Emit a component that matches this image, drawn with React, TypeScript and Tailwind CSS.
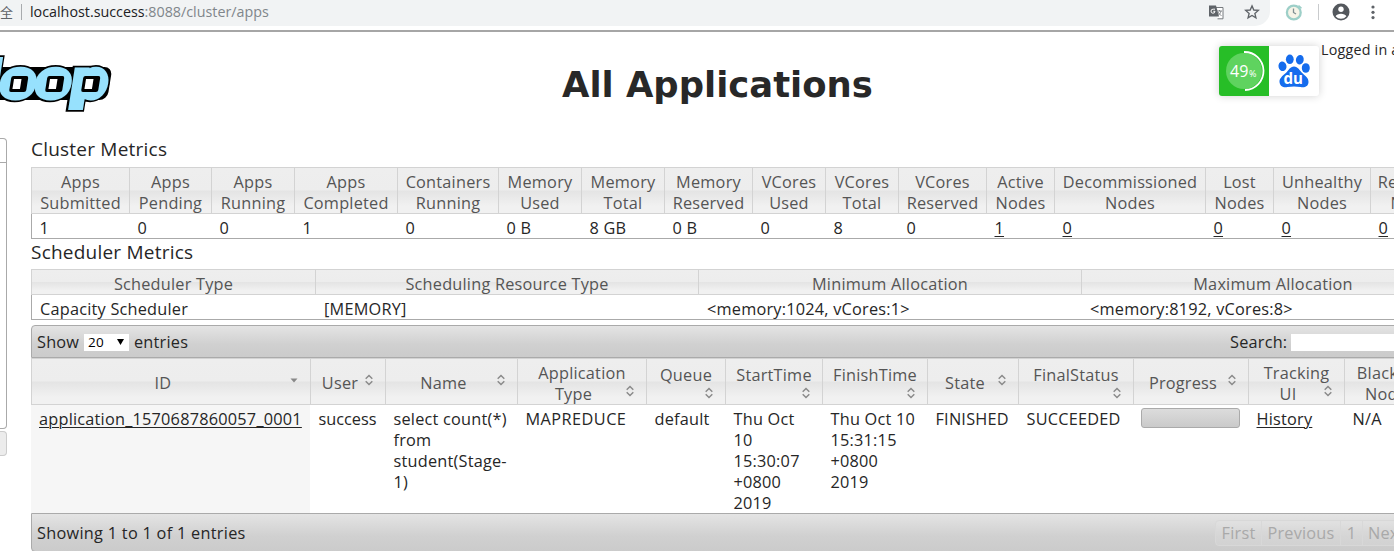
import React from "react";

type Metric = { w: string; head: string[]; value: string; link?: boolean };

const clusterMetrics: Metric[] = [
  { w: "w-[98px]", head: ["Apps", "Submitted"], value: "1" },
  { w: "w-[82px]", head: ["Apps", "Pending"], value: "0" },
  { w: "w-[83px]", head: ["Apps", "Running"], value: "0" },
  { w: "w-[103px]", head: ["Apps", "Completed"], value: "1" },
  { w: "w-[101px]", head: ["Containers", "Running"], value: "0" },
  { w: "w-[83px]", head: ["Memory", "Used"], value: "0 B" },
  { w: "w-[83px]", head: ["Memory", "Total"], value: "8 GB" },
  { w: "w-[88px]", head: ["Memory", "Reserved"], value: "0 B" },
  { w: "w-[73px]", head: ["VCores", "Used"], value: "0" },
  { w: "w-[73px]", head: ["VCores", "Total"], value: "8" },
  { w: "w-[88px]", head: ["VCores", "Reserved"], value: "0" },
  { w: "w-[68px]", head: ["Active", "Nodes"], value: "1", link: true },
  { w: "w-[151px]", head: ["Decommissioned", "Nodes"], value: "0", link: true },
  { w: "w-[68px]", head: ["Lost", "Nodes"], value: "0", link: true },
  { w: "w-[97px]", head: ["Unhealthy", "Nodes"], value: "0", link: true },
  { w: "w-[90px]", head: ["Rebooted", "Nodes"], value: "0", link: true },
];

const schedulerMetrics = [
  { w: "w-[284px]", head: "Scheduler Type", value: "Capacity Scheduler" },
  { w: "w-[383px]", head: "Scheduling Resource Type", value: "[MEMORY]" },
  { w: "w-[383px]", head: "Minimum Allocation", value: "<memory:1024, vCores:1>" },
  { w: "w-[383px]", head: "Maximum Allocation", value: "<memory:8192, vCores:8>" },
];

type Column = {
  w: string;
  head: string[];
  kind: "single" | "double" | "wrapped";
  cell: React.ReactNode;
  sorted?: boolean;
};

const lines = (items: string[]) => items.map((t) => <div key={t}>{t}</div>);
const LINK = "underline decoration-1 underline-offset-[2px]";

const columns: Column[] = [
  {
    w: "w-[279px]",
    head: ["ID"],
    kind: "single",
    sorted: true,
    cell: <a className={LINK}>application_1570687860057_0001</a>,
  },
  { w: "w-[75px]", head: ["User"], kind: "single", cell: <span className="tracking-normal">success</span> },
  {
    w: "w-[132px]",
    head: ["Name"],
    kind: "single",
    cell: lines(["select count(*)", "from", "student(Stage-", "1)"]),
  },
  { w: "w-[129px]", head: ["Application", "Type"], kind: "double", cell: <span className="tracking-[0.45px]">MAPREDUCE</span> },
  { w: "w-[79px]", head: ["Queue"], kind: "wrapped", cell: "default" },
  {
    w: "w-[97px]",
    head: ["StartTime"],
    kind: "wrapped",
    cell: lines(["Thu Oct", "10", "15:30:07", "+0800", "2019"]),
  },
  {
    w: "w-[105px]",
    head: ["FinishTime"],
    kind: "wrapped",
    cell: lines(["Thu Oct 10", "15:31:15", "+0800", "2019"]),
  },
  { w: "w-[91px]", head: ["State"], kind: "single", cell: "FINISHED" },
  { w: "w-[115px]", head: ["FinalStatus"], kind: "wrapped", cell: "SUCCEEDED" },
  {
    w: "w-[115px]",
    head: ["Progress"],
    kind: "single",
    cell: (
      <div className="-ml-[0.5px] h-5 w-[99px] rounded-[3px] border border-[#aaa] bg-linear-to-b from-[#dcdcdc] to-[#cacaca]" />
    ),
  },
  { w: "w-[96px]", head: ["Tracking", "UI"], kind: "double", cell: <a className={LINK}>History</a> },
  { w: "w-[108px]", head: ["Blacklisted", "Nodes"], kind: "double", cell: "N/A" },
];

const HEAD_BG =
  "bg-[linear-gradient(to_bottom,#eeeeee_0%,#ededed_49%,#e4e4e4_51%,#f1f1f1_85%,#f1f1f1_100%)]";
const BAR_BG = "bg-linear-to-b from-[#e4e4e4] via-[#d0d0d0] via-60% to-[#cbcbcb]";

function SortIcon({ sorted }: { sorted?: boolean }) {
  return (
    <svg className="h-[12px] w-[10px] shrink-0" viewBox="0 0 10 12" fill="none">
      {sorted ? (
        <path d="M1.5 4.5h7L5 8.5z" fill="#888" />
      ) : (
        <path d="M1.7 4.7 5 1.5l3.3 3.2M1.7 7.3 5 10.5l3.3-3.2" stroke="#8a8a8a" strokeWidth="1.5" />
      )}
    </svg>
  );
}

function HeadCell({ col }: { col: Column }) {
  if (col.kind === "single") {
    return (
      <div className="flex h-full items-center pt-[3px] pr-[11px]">
        <span className="flex-1 pl-[5px] text-center">{col.head[0]}</span>
        <span className="-mt-[6px] flex">
          <SortIcon sorted={col.sorted} />
        </span>
      </div>
    );
  }
  if (col.kind === "double") {
    return (
      <div className="pt-[4px]">
        <div className="text-center">{col.head[0]}</div>
        <div className="flex items-center pr-[11px]">
          <span className="flex-1 pl-[4px] text-center">{col.head[1]}</span>
          <span className="-mt-[7px] flex">
            <SortIcon />
          </span>
        </div>
      </div>
    );
  }
  return (
    <div className="pt-[6px]">
      <div className="text-center">{col.head[0]}</div>
      <div className="flex justify-end pt-[1px] pr-[11px]">
        <SortIcon />
      </div>
    </div>
  );
}

function AddressBar() {
  return (
    <div className="flex h-[30px] w-full items-start bg-white tracking-normal">
      <div className="flex h-[26px] w-[1270px] items-center rounded-br-[15px] bg-[#f1f3f4]">
        <span className="-mt-[2px] w-[14px] font-['Noto_Sans_CJK_SC',sans-serif] text-[13px] leading-6 text-[#5f6368]">全</span>
        <span className="-mt-[2px] ml-[7px] h-[16px] w-px bg-[#a8abae]" />
        <span className="-mt-[2px] ml-[8px] text-[14.3px] leading-6 text-[#202124]">
          localhost.success<span className="text-[#80868b]">:8088/cluster/apps</span>
        </span>
        <span className="flex-1" />
        <svg className="-mt-[3px] mr-[20px] h-[16px] w-[16px]" viewBox="0 0 16 16">
          <path d="M7 3.5h8v11.3H9.5" fill="#fff" stroke="#777b7f" strokeWidth="1" />
          <path d="M1 1.5h7l3 11H1z" fill="#5f6368" />
          <path d="M7 5.2H5.2a2 2 0 1 0 1.8 2.1H5.3" fill="none" stroke="#fff" strokeWidth="1" />
          <path d="M9 7h5M11.5 6v1M13 7c-.4 2.2-1.6 3.5-3 4.5M10 8c.8 1.8 2 2.8 3.5 3.5" fill="none" stroke="#777b7f" strokeWidth=".9" />
        </svg>
        <svg className="-mt-[2px] mr-[10px] h-[16px] w-[16px]" viewBox="0 0 24 24" fill="none" stroke="#5f6368" strokeWidth="2">
          <path d="M12 2.8 14.7 9l6.8.6-5.2 4.5 1.6 6.7-5.9-3.6-5.9 3.6 1.6-6.7L2.5 9.6 9.3 9z" />
        </svg>
      </div>
      <div className="flex h-[24px] flex-1 items-center pl-[15px]">
        <svg className="h-[18px] w-[18px]" viewBox="0 0 18 18" fill="none">
          <circle cx="8.8" cy="9.5" r="6.9" fill="#f6f4e8" stroke="#9dcfc8" strokeWidth="2.3" />
          <path d="M8.5 5.5v4l2.5 1.5" stroke="#7f8f92" strokeWidth="1.3" />
          <path d="M13.5 2.5l3 2.8" stroke="#9dcfc8" strokeWidth="1.5" />
        </svg>
        <span className="ml-[15px] h-[16px] w-px bg-[#c9cbcd]" />
        <svg className="ml-[13px] h-[18px] w-[18px]" viewBox="0 0 18 18">
          <circle cx="9" cy="9" r="8.5" fill="#54585d" />
          <circle cx="9" cy="6.3" r="2.7" fill="#fff" />
          <path d="M3.6 13.2c1.3-3.4 9.5-3.4 10.8 0a7 7 0 0 1-10.8 0z" fill="#fff" />
        </svg>
        <svg className="ml-[20px] h-[16px] w-[6px]" viewBox="0 0 6 16" fill="#5f6368">
          <circle cx="3" cy="3" r="1.6" />
          <circle cx="3" cy="8.3" r="1.6" />
          <circle cx="3" cy="13.6" r="1.6" />
        </svg>
      </div>
    </div>
  );
}

const logoWindows = [10, 46, 82];

function Logo() {
  return (
    <svg className="h-[62px] w-[116px]" viewBox="0 0 116 62">
      <rect x="-10" y="13" width="121" height="33" rx="8" transform="translate(3.5 0) skewX(-9)" fill="#000" />
      <g
        fontFamily="'DejaVu Sans', sans-serif"
        fontWeight="700"
        fontSize="49"
        transform="translate(-36 42.5) skewX(-9)"
        strokeLinejoin="miter"
        letterSpacing="0"
      >
        <text x="-3" y="0" fill="#000" stroke="#000" strokeWidth="9" textLength="144" lengthAdjust="spacingAndGlyphs">
          doop
        </text>
        <text x="-2.5" y="0" fill="#97e1fd" stroke="#97e1fd" strokeWidth="5.5" textLength="144" lengthAdjust="spacingAndGlyphs">
          doop
        </text>
      </g>
      {logoWindows.map((x) => (
        <g key={x} transform={`translate(${x} 22)`}>
          <rect x="1.5" width="17" height="16" rx="2" transform="skewX(-9)" fill="#000" />
          <rect x="4.500" y="3" width="7.500" height="10" transform="skewX(-9)" fill="#fff" />
        </g>
      ))}
    </svg>
  );
}

function FloatingWidget() {
  return (
    <div className="absolute top-[46px] left-[1219px] flex h-[50px] w-[100px] overflow-hidden rounded-[3px] bg-white tracking-normal shadow-[0_0_8px_rgba(0,0,0,0.18)]">
      <div className="flex w-[50px] items-center justify-center bg-[#27be27]">
        <svg className="h-[50px] w-[50px]" viewBox="0 0 50 50">
          <circle cx="25" cy="25" r="18" fill="#5fd35f" />
          <path d="M25 6a19 19 0 0 1 1 38" fill="none" stroke="#fff" strokeWidth="1.8" />
          <text x="11" y="31" fill="#fff" fontSize="16" fontFamily="'Open Sans', sans-serif">
            49
          </text>
          <text x="30" y="31" fill="#fff" fontSize="9" fontFamily="'Open Sans', sans-serif">
            %
          </text>
        </svg>
      </div>
      <svg className="h-[50px] w-[50px]" viewBox="0 0 50 50" fill="#156ced">
        <ellipse cx="13.5" cy="20.3" rx="4" ry="4.8" transform="rotate(-12 13.5 20.3)" />
        <ellipse cx="20.8" cy="13.3" rx="3.9" ry="4.8" />
        <ellipse cx="30.8" cy="13.7" rx="3.9" ry="4.8" transform="rotate(10 30.8 13.7)" />
        <ellipse cx="36.8" cy="22" rx="4" ry="4.8" />
        <path d="M25 20.5c4 0 5.5 4 8.5 6.8 3.5 3.2 6.3 5.3 6 9-.4 4.5-4 5.5-8 4.7-4.5-.8-8.5-.8-13 0-4 .8-7.6-.5-8-5-.3-3.6 2.8-5.7 6-8.7 3-2.8 4.5-6.8 8.5-6.8z" />
        <text x="14.5" y="38" fill="#fff" fontSize="15.5" fontWeight="700" textLength="19.5" lengthAdjust="spacingAndGlyphs" fontFamily="'Open Sans', sans-serif">
          du
        </text>
      </svg>
    </div>
  );
}

export default function App() {
  return (
    <div className="relative flex h-[551px] w-[1394px] flex-col overflow-hidden bg-white font-['Open_Sans',sans-serif] text-[16.3px] leading-[21px] tracking-[0.22px] text-[#262626]">
      <AddressBar />
      <div className="h-[2px] w-full shrink-0 bg-[#a6a6a6]" />

      <header className="flex h-[101px] shrink-0">
        <div className="w-[562px] pt-[22px]">
          <Logo />
        </div>
        <h1 className="w-[759px] pt-[28px] font-['DejaVu_Sans',sans-serif] text-[35.4px] leading-[50px] font-bold tracking-normal whitespace-nowrap text-[#282828]">
          All Applications
        </h1>
        <div className="w-[73px] pt-[7px] text-[14.3px] whitespace-nowrap">Logged in as: dr.who</div>
      </header>

      <div className="flex min-h-0 flex-1">
        <nav className="w-[31px] shrink-0 pt-[5px]">
          <div className="h-[291px] w-[7px] rounded-r-[4px] border border-l-0 border-[#aaa]">
            <div className="h-[24px] border-b border-[#aaa]" />
          </div>
          <div className="mt-[2px] h-[25px] w-[7px] rounded-r-[4px] border border-l-0 border-[#ccc] bg-[#ececec]" />
        </nav>

        <main className="w-[1434px] shrink-0 whitespace-nowrap">
          <h3 className="h-[34px] pt-[5px] text-[19px] leading-[23px]">Cluster Metrics</h3>
          <section className="border-b border-l border-[#aaa]">
            <div className={`-ml-px flex h-[47px] border-y border-l border-[#d3d3d3] text-[#555] ${HEAD_BG}`}>
              {clusterMetrics.map((m, i) => (
                <div key={i} className={`${m.w} shrink-0 border-r border-[#d3d3d3] pt-[4px] text-center`}>
                  {m.head.map((h) => (
                    <div key={h} className="flex justify-center">{h}</div>
                  ))}
                </div>
              ))}
            </div>
            <div className="flex h-[24px]">
              {clusterMetrics.map((m, i) => (
                <div key={i} className={`${m.w} shrink-0 pt-[4px] pl-[7.5px]`}>
                  {m.link ? <a className={LINK}>{m.value}</a> : m.value}
                </div>
              ))}
            </div>
          </section>

          <h3 className="h-[30px] pt-[2px] text-[19px] leading-[23px]">Scheduler Metrics</h3>
          <section className="border-b border-l border-[#aaa]">
            <div className={`-ml-px flex h-[26px] border-y border-l border-[#d3d3d3] text-[#555] ${HEAD_BG}`}>
              {schedulerMetrics.map((m) => (
                <div key={m.head} className={`${m.w} shrink-0 border-r border-[#d3d3d3] pt-[4px] text-center`}>
                  {m.head}
                </div>
              ))}
            </div>
            <div className="flex h-[24px]">
              {schedulerMetrics.map((m) => (
                <div key={m.head} className={`${m.w} shrink-0 pt-[4px] pl-[8px]`}>
                  {m.value}
                </div>
              ))}
            </div>
          </section>

          <div className={`mt-[5px] flex h-[33px] items-center rounded-tl-[4px] border border-[#aaa] pt-px pl-[5px] ${BAR_BG}`}>
            <span className="w-[42px]">Show</span>
            <span className="ml-[5px] flex h-[17px] w-[45px] items-center bg-white pr-[5px] pl-[4px] text-[13.5px] text-black">
              <span className="flex-1">20</span>
              <svg className="h-[6px] w-[7px]" viewBox="0 0 7 6">
                <path d="M0 0h7L3.5 6z" />
              </svg>
            </span>
            <span className="ml-[5px] w-[1096px]">entries</span>
            <span className="w-[56px]">Search:</span>
            <span className="ml-[5px] h-[17px] w-[140px] bg-white" />
          </div>

          <div className={`flex h-[47px] border-y border-l border-[#d3d3d3] text-[#555] ${HEAD_BG}`}>
            {columns.map((c) => (
              <div key={c.head[0]} className={`${c.w} shrink-0 border-r border-[#d3d3d3]`}>
                <HeadCell col={c} />
              </div>
            ))}
          </div>
          <div className="flex h-[108px]">
            {columns.map((c, i) => (
              <div
                key={c.head[0]}
                className={`${c.w} shrink-0 ${i === 0 ? "pl-[8px]" : "pl-[8.5px]"} ${c.sorted ? "bg-[#f6f6f6]" : ""} ${c.head[0] === "Progress" ? "pt-[3px]" : "pt-[4px]"}`}
              >
                {c.cell}
              </div>
            ))}
          </div>

          <div className={`flex h-[39px] items-center rounded-bl-[4px] border border-[#aaa] pt-px pl-[5px] ${BAR_BG}`}>
            <span className="w-[1178px] tracking-[0.28px]">Showing 1 to 1 of 1 entries</span>
            <div className="flex h-[26px] items-center rounded-[4px] border border-[#d8d8d8] bg-white/10 text-[#a9a9a9]">
              <span className="w-[46px] border-r border-[#d8d8d8] text-center leading-6">First</span>
              <span className="w-[79px] border-r border-[#d8d8d8] text-center leading-6">Previous</span>
              <span className="w-[22px] border-r border-[#d8d8d8] text-center leading-6">1</span>
              <span className="w-[46px] border-r border-[#d8d8d8] pl-[5px] leading-6">Next</span>
              <span className="w-[44px] text-center leading-6">Last</span>
            </div>
          </div>
        </main>
      </div>

      <FloatingWidget />
    </div>
  );
}
